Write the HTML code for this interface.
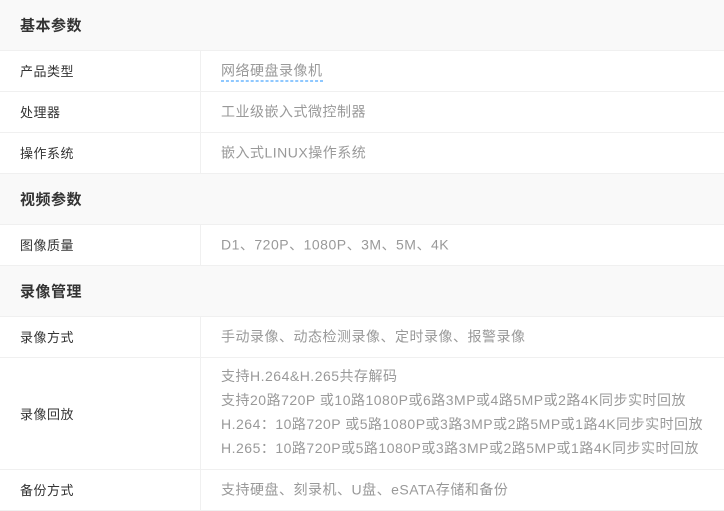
<!DOCTYPE html>
<html><head><meta charset="utf-8"><style>
body{margin:0;width:724px;height:508px;overflow:hidden;background:#fff;font-family:"Liberation Sans","Noto Sans CJK SC",sans-serif;}
.r{position:absolute;left:0;width:724px;border-bottom:1px solid #f0f0f0;box-sizing:border-box;}
.h{background:#f9f9f9;font-size:15px;font-weight:bold;color:#333;}
.h span{position:absolute;left:20px;top:50%;transform:translateY(-50%);letter-spacing:0.5px;}
.l{position:absolute;left:20px;top:50%;transform:translateY(-52%);font-size:13px;color:#333;letter-spacing:0.5px;}
.v{position:absolute;left:200px;top:0;bottom:0;border-left:1px solid #f0f0f0;}
.v div{position:absolute;left:20px;top:50%;transform:translateY(-52%);font-size:14px;color:#999;white-space:nowrap;line-height:22px;letter-spacing:0.5px;}
a{color:#999;text-decoration:none;border-bottom:1px dashed #1e90ff;padding-bottom:2px;}
</style></head><body>
<div class="r h" style="top:0;height:51px"><span>基本参数</span></div>
<div class="r" style="top:51px;height:41px"><div class="l">产品类型</div><div class="v"><div><a>网络硬盘录像机</a></div></div></div>
<div class="r" style="top:92px;height:41px"><div class="l">处理器</div><div class="v"><div>工业级嵌入式微控制器</div></div></div>
<div class="r" style="top:133px;height:41px"><div class="l">操作系统</div><div class="v"><div>嵌入式LINUX操作系统</div></div></div>
<div class="r h" style="top:174px;height:51px"><span>视频参数</span></div>
<div class="r" style="top:225px;height:41px"><div class="l">图像质量</div><div class="v"><div>D1、720P、1080P、3M、5M、4K</div></div></div>
<div class="r h" style="top:266px;height:51px"><span>录像管理</span></div>
<div class="r" style="top:317px;height:41px"><div class="l">录像方式</div><div class="v"><div>手动录像、动态检测录像、定时录像、报警录像</div></div></div>
<div class="r" style="top:358px;height:112px"><div class="l">录像回放</div><div class="v"><div style="line-height:24px">支持H.264&amp;H.265共存解码<br>支持20路720P 或10路1080P或6路3MP或4路5MP或2路4K同步实时回放<br>H.264：10路720P 或5路1080P或3路3MP或2路5MP或1路4K同步实时回放<br>H.265：10路720P或5路1080P或3路3MP或2路5MP或1路4K同步实时回放</div></div></div>
<div class="r" style="top:470px;height:41px"><div class="l">备份方式</div><div class="v"><div>支持硬盘、刻录机、U盘、eSATA存储和备份</div></div></div>
</body></html>
